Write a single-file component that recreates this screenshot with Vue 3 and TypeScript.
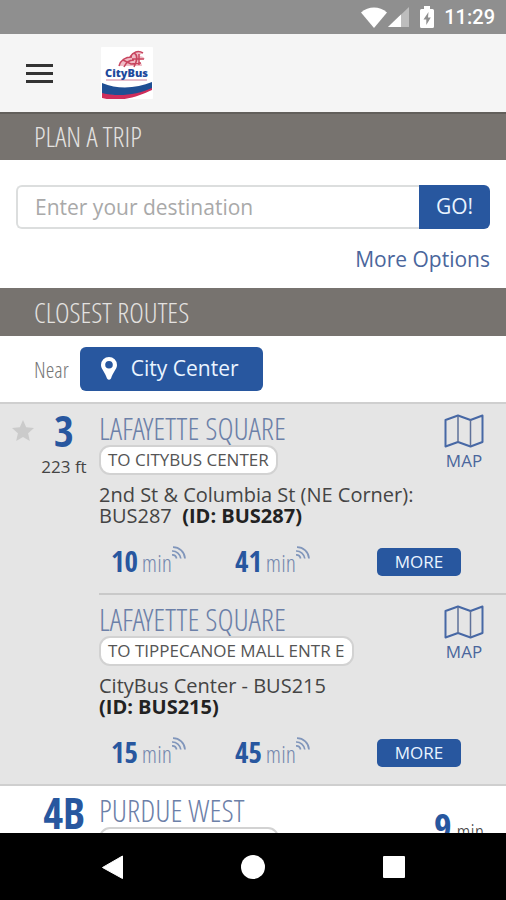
<script setup lang="ts">
interface Departure {
  minutes: number
}

interface Stop {
  id: string
  title: string
  headsign: string
  stopName: string
  stopId: string
  departures: Departure[]
}

const nearPlace = 'City Center'

const stops: Stop[] = [
  {
    id: 'citybus-center',
    title: 'LAFAYETTE SQUARE',
    headsign: 'TO CITYBUS CENTER',
    stopName: '2nd St & Columbia St (NE Corner): BUS287',
    stopId: '(ID: BUS287)',
    departures: [{ minutes: 10 }, { minutes: 41 }],
  },
  {
    id: 'tippecanoe',
    title: 'LAFAYETTE SQUARE',
    headsign: 'TO TIPPECANOE MALL ENTR E',
    stopName: 'CityBus Center - BUS215',
    stopId: '(ID: BUS215)',
    departures: [{ minutes: 15 }, { minutes: 45 }],
  },
]
</script>

<template>
  <div class="screen">
    <div class="status">
      <svg class="wifi" viewBox="0 0 26 21" aria-hidden="true">
        <path d="M0 5.500C7.500-1.200 18.500-1.200 26 5.500L13 21Z" fill="#fff" />
      </svg>
      <svg class="signal" viewBox="0 0 21 20" aria-hidden="true">
        <path d="M21 0V20H0Z" fill="#bdbdbd" />
        <path d="M13 7.600V20H0Z" fill="#fff" />
      </svg>
      <svg class="battery" viewBox="0 0 14 22" aria-hidden="true">
        <path d="M4 0H10V3H12.500Q14 3 14 4.500V20.500Q14 22 12.500 22H1.500Q0 22 0 20.500V4.500Q0 3 1.500 3H4Z" fill="#fff" />
        <path d="M8.500 6L3.500 13.500H6.300V19L10.800 11.500H8Z" fill="#8f8f8f" />
      </svg>
      <span class="clock">11:29</span>
    </div>

    <header class="header">
      <button class="menu" type="button" aria-label="Menu"><i></i><i></i><i></i></button>
      <a class="logo" href="#" aria-label="CityBus">
        <svg viewBox="0 0 52 52" aria-hidden="true">
          <rect width="52" height="52" rx="1" fill="#fff" />
          <path d="M18 19C20 12 25 10 30 10C32 5 38 3 42 6C40 7 39 8 38 9C41 9 43 10 44 12C41 12 39 13 37 14C40 15 41 17 41 19Z" fill="#f0bcc6" />
          <path d="M18 19C20 12 25 10 31 10M23 20C25 15 28 13 33 13M29 10C32 5 37 3 42 6M33 6C37 8 36 14 33 20M31 12H43M38 7V18M22 13L30 17L40 16" fill="none" stroke="#c8455f" stroke-width="1.500" />
          <path d="M5 33H46" stroke="#dfa9bb" stroke-width="1.500" />
          <text class="logo-name" x="25.500" y="30" text-anchor="middle">CityBus</text>
          <path d="M1 45C20 51 36 45 51 40V43C38 49 20 56 1 51Z" fill="#cf2d5b" />
          <path d="M1 36C18 43 36 41 51 35V41C36 48 17 50 1 46Z" fill="#1f4f93" />
        </svg>
      </a>
    </header>

    <main class="content">
      <h2 class="bar">PLAN A TRIP</h2>

      <form class="trip" @submit.prevent>
        <div class="search">
          <input class="field" type="text" placeholder="Enter your destination" aria-label="Enter your destination" />
          <button class="go" type="submit">GO!</button>
        </div>
        <a class="options" href="#">More Options</a>
      </form>

      <h2 class="bar">CLOSEST ROUTES</h2>

      <div class="near">
        <span class="near-label">Near</span>
        <button class="place" type="button">
          <svg class="pin" viewBox="0 0 16 23" aria-hidden="true">
            <path fill-rule="evenodd" d="M8 0A8 8 0 0 1 16 8C16 12 12 15 10 21.500Q8 24 6 21.500C4 15 0 12 0 8A8 8 0 0 1 8 0ZM8 4A3.800 3.800 0 1 0 8 11.600A3.800 3.800 0 1 0 8 4Z" fill="#fff" />
          </svg>
          <span>{{ nearPlace }}</span>
        </button>
      </div>

      <section class="route shaded">
        <button class="star" type="button" aria-label="Favorite">
          <svg viewBox="0 0 22 22" aria-hidden="true">
            <path d="M11 0L14.200 7.200L22 8L16.100 13.300L17.800 21L11 17L4.200 21L5.900 13.300L0 8L7.800 7.200Z" fill="#cbcbcb" />
          </svg>
        </button>
        <div class="badge">
          <strong class="number">3</strong>
          <span class="distance">223 ft</span>
        </div>
        <div class="stops">
          <article v-for="stop in stops" :key="stop.id" class="stop">
            <div class="top">
              <div class="names">
                <h3 class="title">{{ stop.title }}</h3>
                <span class="headsign">{{ stop.headsign }}</span>
              </div>
              <a class="map" href="#">
                <svg viewBox="0 0 40 34" aria-hidden="true">
                  <path d="M1.500 6L14 1.500L26.500 6L38.500 1.500V28L26.500 32.500L14 28L1.500 32.500Z" fill="none" stroke="#4768a5" stroke-width="2" stroke-linejoin="round" />
                  <path d="M14 2V28M26.500 6V32" stroke="#5f7199" stroke-width="1.500" />
                </svg>
                <span>MAP</span>
              </a>
            </div>
            <p class="place-name">{{ stop.stopName }}&nbsp; <b>{{ stop.stopId }}</b></p>
            <div class="times">
              <span v-for="d in stop.departures" :key="d.minutes" class="time">
                <strong>{{ d.minutes }}</strong>
                <span class="unit">min</span>
                <svg class="live" viewBox="0 0 14 14" aria-hidden="true">
                  <path d="M1 1.200A12 12 0 0 1 13 12.500M0 5A8.500 8.500 0 0 1 8.800 12.500M0 8.800A4.500 4.500 0 0 1 4.600 12.500" fill="none" stroke="#8196bb" stroke-width="1.700" />
                </svg>
              </span>
              <button class="more" type="button">MORE</button>
            </div>
          </article>
        </div>
      </section>

      <section class="route">
        <div class="badge">
          <strong class="number">4B</strong>
        </div>
        <div class="names">
          <h3 class="title">PURDUE WEST</h3>
          <span class="headsign wide"></span>
        </div>
        <span class="next"><strong>9</strong><span>min</span></span>
      </section>
    </main>

    <nav class="system" aria-label="System">
      <button type="button" aria-label="Back">
        <svg viewBox="0 0 24 24" aria-hidden="true"><path d="M22.500 1V23.500L2.500 12.500Z" fill="#fff" stroke="#fff" stroke-linejoin="round" /></svg>
      </button>
      <button type="button" aria-label="Home">
        <svg viewBox="0 0 24 24" aria-hidden="true"><circle cx="12" cy="12" r="12" fill="#fff" /></svg>
      </button>
      <button type="button" aria-label="Recent apps">
        <svg viewBox="0 0 24 24" aria-hidden="true"><rect x="1" y="1" width="22" height="22" rx="1" fill="#fff" /></svg>
      </button>
    </nav>
  </div>
</template>

<style>
body {
  margin: 0;
}
</style>

<style scoped>
.screen {
  --blue: #28579f;
  --cond: "Open Sans Condensed", "Roboto Condensed", sans-serif;
  --light: "Open Sans Condensed Light", "Roboto Condensed", sans-serif;
  display: flex;
  flex-direction: column;
  height: 100vh;
  background: #fff;
  color: #444;
  font-family: "Open Sans", "Noto Sans", sans-serif;
}

.screen *,
.screen {
  box-sizing: border-box;
}

button {
  margin: 0;
  padding: 0;
  border: 0;
  background: none;
  color: inherit;
  font: inherit;
}

a {
  color: #4a669c;
  text-decoration: none;
}

svg {
  display: block;
  flex: none;
}

h2,
h3,
p {
  margin: 0;
  font-weight: 400;
}

.status {
  display: flex;
  flex: none;
  align-items: center;
  justify-content: flex-end;
  height: 34px;
  padding-right: 11px;
  background: #8f8f8f;
}

.wifi {
  width: 26px;
  height: 21px;
}

.signal {
  width: 21px;
  height: 20px;
  margin-left: 1px;
}

.battery {
  width: 14px;
  height: 22px;
  margin-left: 11px;
}

.clock {
  margin-left: 10px;
  color: #fff;
  font: 500 20px/34px Roboto, sans-serif;
}

.header {
  display: flex;
  flex: none;
  align-items: center;
  position: relative;
  height: 78px;
  padding: 0 26px;
  background: #f5f5f5;
  box-shadow: 0 2px #625f5b;
}

.menu {
  display: grid;
  gap: 5px;
  width: 27px;
}

.menu i {
  height: 3px;
  background: #333;
}

.logo {
  margin-left: 48px;
}

.logo svg {
  width: 52px;
  height: 52px;
}

.logo-name {
  fill: #1d4a9c;
  font: 800 11px "Open Sans", sans-serif;
}

.content {
  flex: 1;
  min-height: 0;
  overflow: hidden;
}

.bar {
  padding: 0 34px;
  background: #77736f;
  color: #e4e2e0;
  font: 400 28px/48px var(--light);
}

.trip {
  display: grid;
  gap: 16px;
  padding: 25px 16px 15px;
}

.search {
  display: flex;
  height: 44px;
}

.field {
  flex: 1;
  min-width: 0;
  padding: 0 17px;
  border: 2px solid #dcdede;
  border-right: 0;
  border-radius: 6px 0 0 6px;
  background: #fff;
  color: #444;
  font: inherit;
  font-size: 21px;
}

.field::placeholder {
  color: #a9a9a9;
  opacity: 1;
}

.go {
  width: 71px;
  padding-bottom: 2px;
  border-radius: 0 6px 6px 0;
  background: var(--blue);
  color: #eaf4ff;
  font-size: 21px;
}

.options {
  justify-self: end;
  font-size: 21px;
  line-height: 28px;
}

.near {
  display: flex;
  align-items: center;
  gap: 11px;
  height: 66px;
  padding: 0 34px;
}

.near-label {
  color: #777;
  font: 400 22px/44px var(--light);
}

.place {
  display: flex;
  align-items: center;
  gap: 14px;
  height: 44px;
  padding: 0 24px 2px 21px;
  border-radius: 6px;
  background: var(--blue);
  color: #eaf4ff;
  font-size: 21px;
}

.pin {
  width: 16px;
  height: 23px;
}

.route {
  display: grid;
  grid-template-columns: 99px 1fr auto;
  position: relative;
  border-top: 2px solid #cfcfcf;
}

.shaded {
  grid-template-columns: 99px 1fr;
  background: #e5e5e5;
}

.star {
  position: absolute;
  top: 16px;
  left: 12px;
}

.star svg {
  width: 22px;
  height: 22px;
}

.badge {
  display: flex;
  flex-direction: column;
  align-items: center;
  padding-left: 29px;
}

.number {
  color: var(--blue);
  font: 700 43px/54px var(--cond);
}

.distance {
  font-size: 17px;
  line-height: 17px;
  white-space: nowrap;
}

.stop + .stop {
  border-top: 2px solid #c9c9c9;
}

.top {
  display: flex;
  justify-content: space-between;
  padding-right: 22px;
}

.title {
  padding-top: 7px;
  color: #6c80a8;
  font: 400 31px/34px var(--light);
}

.headsign {
  display: inline-block;
  height: 30px;
  padding: 0 7px;
  border: 2px solid #d2d2d2;
  border-radius: 11px;
  background: #fff;
  color: #555;
  font-size: 17px;
  line-height: 25px;
  white-space: nowrap;
}

.wide {
  width: 180px;
}

.map {
  display: grid;
  justify-items: center;
  align-content: start;
  padding-top: 10px;
  font-size: 17px;
  line-height: 26px;
}

.map svg {
  width: 40px;
  height: 34px;
}

.place-name {
  max-width: 330px;
  padding-top: 9px;
  font-size: 20px;
  line-height: 21px;
}

.place-name b {
  color: #222;
  white-space: nowrap;
}

.times {
  display: grid;
  grid-template-columns: 124px 1fr auto;
  align-items: center;
  height: 67px;
  padding: 4px 45px 0 12px;
}

.time {
  display: flex;
  align-items: baseline;
  color: #7488ae;
}

.time strong {
  color: var(--blue);
  font: 700 29px/40px var(--cond);
}

.unit {
  margin-left: 4px;
  font: 400 24px/40px var(--light);
}

.live {
  align-self: flex-start;
  width: 14px;
  height: 14px;
  margin-top: 5px;
}

.more {
  width: 84px;
  height: 28px;
  border-radius: 5px;
  background: var(--blue);
  color: #eaf4ff;
  font-size: 17px;
  line-height: 26px;
}

.next {
  display: flex;
  gap: 5px;
  padding: 18px 22px 0 0;
  color: #444;
  font: 400 22px/54px var(--light);
}

.next strong {
  color: var(--blue);
  font: 700 38px/44px var(--cond);
}

.system {
  display: flex;
  flex: none;
  align-items: center;
  justify-content: space-around;
  height: 67px;
  padding: 0 42px;
  background: #000;
}

.system svg {
  width: 24px;
  height: 24px;
}
</style>
